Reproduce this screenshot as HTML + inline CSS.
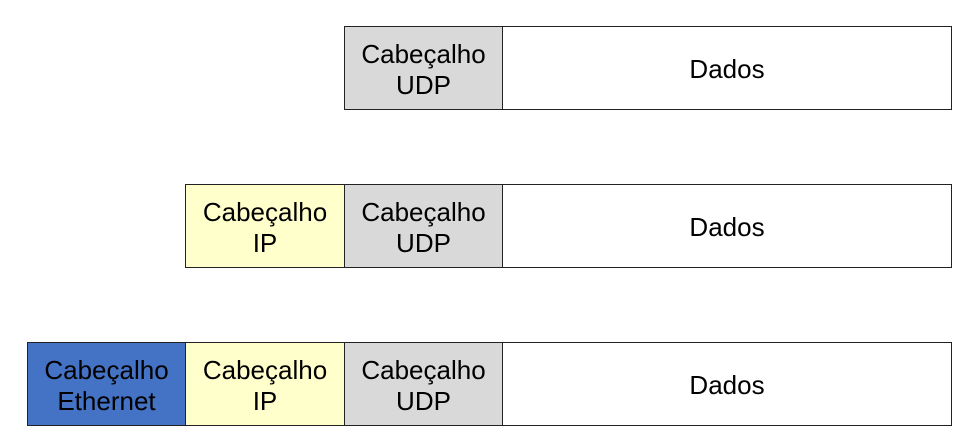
<!DOCTYPE html><html><head><style>
body{margin:0;width:969px;height:442px;background:#fff;position:relative;font-family:"Liberation Sans",sans-serif;overflow:hidden}
.b{position:absolute;box-sizing:border-box;border:1px solid #222;display:flex;align-items:center;justify-content:center;text-align:center;font-size:26px;line-height:31px;color:#000;padding-top:3px}
</style></head><body>
<div class="b" style="left:344px;top:26px;width:159px;height:84px;background:#d9d9d9">Cabeçalho<br>UDP</div>
<div class="b" style="left:502px;top:26px;width:450px;height:84px;background:#fff">Dados</div>
<div class="b" style="left:185px;top:184px;width:160px;height:84px;background:#ffffcc">Cabeçalho<br>IP</div>
<div class="b" style="left:344px;top:184px;width:159px;height:84px;background:#d9d9d9">Cabeçalho<br>UDP</div>
<div class="b" style="left:502px;top:184px;width:450px;height:84px;background:#fff">Dados</div>
<div class="b" style="left:27px;top:342px;width:159px;height:84px;background:#4472c4">Cabeçalho<br>Ethernet</div>
<div class="b" style="left:185px;top:342px;width:160px;height:84px;background:#ffffcc">Cabeçalho<br>IP</div>
<div class="b" style="left:344px;top:342px;width:159px;height:84px;background:#d9d9d9">Cabeçalho<br>UDP</div>
<div class="b" style="left:502px;top:342px;width:450px;height:84px;background:#fff">Dados</div>
</body></html>
